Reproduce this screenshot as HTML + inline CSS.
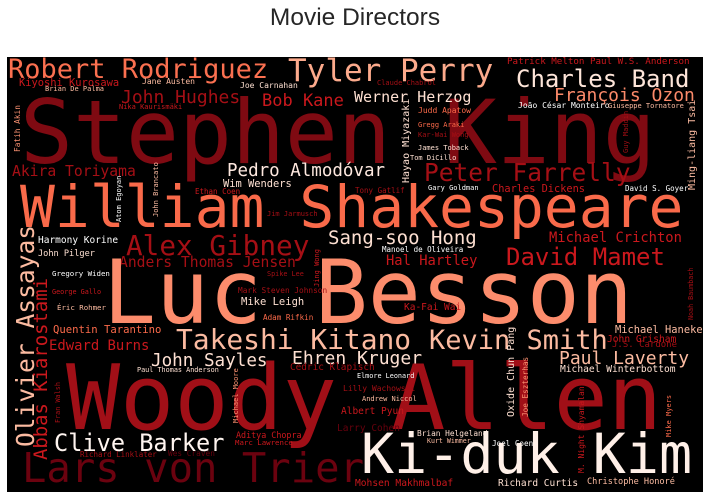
<!DOCTYPE html>
<html><head><meta charset="utf-8"><style>
html,body{margin:0;padding:0;background:#fff;width:710px;height:499px;overflow:hidden;position:relative}
#t{position:absolute;left:0;width:710px;top:4px;text-align:center;font-family:"Liberation Sans",sans-serif;font-size:24.5px;color:#262626}
#bg{position:absolute;left:7px;top:57px;width:696px;height:435px;background:#000;overflow:hidden}
.w{position:absolute;white-space:nowrap;line-height:1;font-family:"DejaVu Sans Mono",monospace}
.v{transform-origin:0 0;transform:rotate(-90deg)}
</style></head><body>
<div id="t">Movie Directors</div>
<div id="bg"></div>
<div id="c" style="position:absolute;left:0;top:0;width:710px;height:492px;overflow:hidden;clip-path:inset(57px 7px 0 7px)">
<div class="w" style="left:20px;top:88.5px;font-size:88px;color:#7f0a12">Stephen King</div>
<div class="w" style="left:8px;top:56px;font-size:27px;color:#fb7050">Robert Rodriguez</div>
<div class="w" style="left:288px;top:56px;font-size:31px;color:#fcaa8c">Tyler Perry</div>
<div class="w" style="left:516px;top:66.7px;font-size:24px;color:#fee5d9">Charles Band</div>
<div class="w" style="left:507px;top:57.2px;font-size:9.2px;color:#cb181d">Patrick Melton Paul W.S. Anderson</div>
<div class="w" style="left:19px;top:78.2px;font-size:10.4px;color:#cb181d">Kiyoshi Kurosawa</div>
<div class="w" style="left:142px;top:78.2px;font-size:8px;color:#fcbba1">Jane Austen</div>
<div class="w" style="left:45px;top:86.1px;font-size:7px;color:#fcbba1">Brian De Palma</div>
<div class="w" style="left:240px;top:82.2px;font-size:8px;color:#fee0d2">Joe Carnahan</div>
<div class="w" style="left:121px;top:88.8px;font-size:18px;color:#a50f15">John Hughes</div>
<div class="w" style="left:262px;top:92.6px;font-size:17px;color:#cb181d">Bob Kane</div>
<div class="w" style="left:119px;top:104.1px;font-size:7px;color:#cb181d">Nika Kaurismäki</div>
<div class="w" style="left:354px;top:90.3px;font-size:15px;color:#fee0d2">Werner Herzog</div>
<div class="w" style="left:377px;top:80.1px;font-size:7px;color:#a50f15">Claude Chabrol</div>
<div class="w" style="left:554px;top:86.8px;font-size:18px;color:#fc8a6a">François Ozon</div>
<div class="w" style="left:418px;top:107.2px;font-size:8px;color:#fb6a4a">Judd Apatow</div>
<div class="w" style="left:518px;top:102.2px;font-size:8px;color:#fff">João César Monteiro</div>
<div class="w" style="left:608px;top:103.1px;font-size:7px;color:#fcbba1">Giuseppe Tornatore</div>
<div class="w" style="left:418px;top:122.1px;font-size:7px;color:#fb6a4a">Gregg Araki</div>
<div class="w" style="left:418px;top:132.1px;font-size:7px;color:#a50f15">Kar-Wai Wong</div>
<div class="w" style="left:418px;top:145.1px;font-size:7px;color:#fee0d2">James Toback</div>
<div class="w" style="left:410px;top:155.1px;font-size:7px;color:#fee0d2">Tom DiCillo</div>
<div class="w" style="left:424px;top:161.3px;font-size:24.5px;color:#a50f15">Peter Farrelly</div>
<div class="w" style="left:625px;top:184.7px;font-size:7.5px;color:#fff">David S. Goyer</div>
<div class="w" style="left:428px;top:185.1px;font-size:7px;color:#fff">Gary Goldman</div>
<div class="w" style="left:355px;top:186.7px;font-size:7.5px;color:#a50f15">Tony Gatlif</div>
<div class="w" style="left:492px;top:184.3px;font-size:10.3px;color:#cb181d">Charles Dickens</div>
<div class="w" style="left:227px;top:163.2px;font-size:17.5px;color:#fee8df">Pedro Almodóvar</div>
<div class="w" style="left:12px;top:164.6px;font-size:14.7px;color:#a50f15">Akira Toriyama</div>
<div class="w" style="left:223px;top:179.2px;font-size:10.4px;color:#fee0d2">Wim Wenders</div>
<div class="w" style="left:195px;top:187.7px;font-size:7.5px;color:#cb181d">Ethan Coen</div>
<div class="w" style="left:267px;top:211.1px;font-size:7px;color:#a50f15">Jim Jarmusch</div>
<div class="w" style="left:20px;top:178px;font-size:58px;color:#f96a4a">William Shakespeare</div>
<div class="w" style="left:38px;top:236px;font-size:9.5px;color:#fff">Harmony Korine</div>
<div class="w" style="left:38px;top:249.7px;font-size:8.6px;color:#fee0d2">John Pilger</div>
<div class="w" style="left:126px;top:231.6px;font-size:27.7px;color:#a50f15">Alex Gibney</div>
<div class="w" style="left:119px;top:255.6px;font-size:14.7px;color:#a50f15">Anders Thomas Jensen</div>
<div class="w" style="left:328px;top:228.9px;font-size:19px;color:#fee0d2">Sang-soo Hong</div>
<div class="w" style="left:382px;top:245.7px;font-size:7.5px;color:#fff">Manoel de Oliveira</div>
<div class="w" style="left:386px;top:255.3px;font-size:13.8px;color:#cb181d">Hal Hartley</div>
<div class="w" style="left:506px;top:244.7px;font-size:24px;color:#cb181d">David Mamet</div>
<div class="w" style="left:549px;top:232.3px;font-size:13.8px;color:#cb181d">Michael Crichton</div>
<div class="w" style="left:52px;top:269.7px;font-size:7.4px;color:#fff">Gregory Widen</div>
<div class="w" style="left:52px;top:289.2px;font-size:6.8px;color:#cb181d">George Gallo</div>
<div class="w" style="left:57px;top:303.7px;font-size:7.4px;color:#fcbba1">Éric Rohmer</div>
<div class="w" style="left:53px;top:325px;font-size:10.6px;color:#fb6a4a">Quentin Tarantino</div>
<div class="w" style="left:49px;top:340.2px;font-size:13.9px;color:#cb181d">Edward Burns</div>
<div class="w" style="left:103px;top:248.6px;font-size:88px;color:#fc8c6c">Luc Besson</div>
<div class="w" style="left:267px;top:271.2px;font-size:6.8px;color:#a50f15">Spike Lee</div>
<div class="w" style="left:238px;top:287.4px;font-size:7.8px;color:#a50f15">Mark Steven Johnson</div>
<div class="w" style="left:241px;top:297.1px;font-size:10.5px;color:#fee0d2">Mike Leigh</div>
<div class="w" style="left:263px;top:313.6px;font-size:7.6px;color:#fb6a4a">Adam Rifkin</div>
<div class="w" style="left:404px;top:303px;font-size:9.5px;color:#cb181d">Ka-Fai Wai</div>
<div class="w" style="left:176px;top:326.4px;font-size:27.9px;color:#fcbba1">Takeshi Kitano</div>
<div class="w" style="left:429px;top:327.2px;font-size:27px;color:#fcbba1">Kevin Smith</div>
<div class="w" style="left:615px;top:325.2px;font-size:10.4px;color:#fcbba1">Michael Haneke</div>
<div class="w" style="left:607px;top:334.9px;font-size:9.6px;color:#cb181d">John Grisham</div>
<div class="w" style="left:612px;top:341.4px;font-size:9px;color:#a50f15">J.S. Cardone</div>
<div class="w" style="left:151px;top:353.1px;font-size:17.6px;color:#fee0d2">John Sayles</div>
<div class="w" style="left:292px;top:349.8px;font-size:18px;color:#fee0d2">Ehren Kruger</div>
<div class="w" style="left:137px;top:367.2px;font-size:6.8px;color:#fee0d2">Paul Thomas Anderson</div>
<div class="w" style="left:290px;top:363px;font-size:9.4px;color:#a50f15">Cedric Klapisch</div>
<div class="w" style="left:559px;top:349.8px;font-size:18px;color:#fcbba1">Paul Laverty</div>
<div class="w" style="left:560px;top:364.9px;font-size:9.6px;color:#fee0d2">Michael Winterbottom</div>
<div class="w" style="left:66px;top:354px;font-size:90px;color:#a10f17">Woody Allen</div>
<div class="w" style="left:357px;top:373.2px;font-size:6.8px;color:#fff">Elmore Leonard</div>
<div class="w" style="left:343px;top:385px;font-size:8px;color:#a50f15">Lilly Wachowski</div>
<div class="w" style="left:362px;top:396.1px;font-size:7px;color:#fcbba1">Andrew Niccol</div>
<div class="w" style="left:341px;top:407px;font-size:9.5px;color:#cb181d">Albert Pyun</div>
<div class="w" style="left:337px;top:424px;font-size:9.5px;color:#67000d">Larry Cohen</div>
<div class="w" style="left:236px;top:430.9px;font-size:8.4px;color:#cb181d">Aditya Chopra</div>
<div class="w" style="left:235px;top:438.7px;font-size:7.4px;color:#cb181d">Marc Lawrence</div>
<div class="w" style="left:54px;top:432px;font-size:23.6px;color:#fff5f0">Clive Barker</div>
<div class="w" style="left:80px;top:450.7px;font-size:7.5px;color:#a50f15">Richard Linklater</div>
<div class="w" style="left:168px;top:450.4px;font-size:7.8px;color:#67000d">Wes Craven</div>
<div class="w" style="left:22px;top:447.7px;font-size:40.6px;color:#6b020f">Lars von Trier</div>
<div class="w" style="left:417px;top:430.4px;font-size:7.8px;color:#fee0d2">Brian Helgeland</div>
<div class="w" style="left:427px;top:438.4px;font-size:6.6px;color:#fcbba1">Kurt Wimmer</div>
<div class="w" style="left:492px;top:439.6px;font-size:7.6px;color:#fff">Joel Coen</div>
<div class="w" style="left:361px;top:426.5px;font-size:55px;color:#fff0e8">Ki-duk Kim</div>
<div class="w" style="left:355px;top:478.9px;font-size:9.6px;color:#cb181d">Mohsen Makhmalbaf</div>
<div class="w" style="left:498px;top:479px;font-size:9.5px;color:#fee0d2">Richard Curtis</div>
<div class="w" style="left:587px;top:477.7px;font-size:8.6px;color:#fcbba1">Christophe Honoré</div>
<div class="w v" style="left:401.5px;top:183px;font-size:10px;color:#fee0d2">Hayao Miyazaki</div>
<div class="w v" style="left:623px;top:153px;font-size:7px;color:#a50f15">Guy Maddin</div>
<div class="w v" style="left:687.5px;top:190px;font-size:10px;color:#fcbba1">Ming-liang Tsai</div>
<div class="w v" style="left:13.7px;top:152px;font-size:7.8px;color:#fc9272">Fatih Akin</div>
<div class="w v" style="left:116px;top:222px;font-size:7px;color:#fff">Atom Egoyan</div>
<div class="w v" style="left:153px;top:217px;font-size:7px;color:#fcbba1">John Brancato</div>
<div class="w v" style="left:314px;top:287px;font-size:7px;color:#cb181d">Jing Wong</div>
<div class="w v" style="left:13.5px;top:447px;font-size:24.6px;color:#fcbba1">Olivier Assayas</div>
<div class="w v" style="left:31.6px;top:460px;font-size:18.9px;color:#cb181d">Abbas Kiarostami</div>
<div class="w v" style="left:688px;top:320px;font-size:6.7px;color:#a50f15">Noah Baumbach</div>
<div class="w v" style="left:506.5px;top:417px;font-size:10px;color:#fee0d2">Oxide Chun Pang</div>
<div class="w v" style="left:521.8px;top:417px;font-size:7.7px;color:#fc9272">Joe Eszterhas</div>
<div class="w v" style="left:233px;top:423px;font-size:7px;color:#fc9272">Michael Moore</div>
<div class="w v" style="left:55px;top:423px;font-size:6.8px;color:#a50f15">Fran Walsh</div>
<div class="w v" style="left:577.6px;top:473px;font-size:8px;color:#cb181d">M. Night Shyamalan</div>
<div class="w v" style="left:666px;top:437px;font-size:7px;color:#fb6a4a">Mike Myers</div>
</div>
</body></html>
